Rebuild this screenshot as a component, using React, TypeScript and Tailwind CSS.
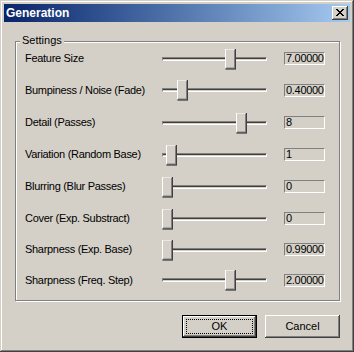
import React from "react";

const raised =
  "shadow-[inset_-1px_-1px_#404040,inset_1px_1px_#ffffff,inset_-2px_-2px_#808080,inset_2px_2px_#d4d0c8]";

const rows = [
  { label: "Feature Size", value: "7.00000", pos: 63, h: "h-[31px]" },
  { label: "Bumpiness / Noise (Fade)", value: "0.40000", pos: 15, h: "h-[32px]" },
  { label: "Detail (Passes)", value: "8", pos: 74, h: "h-[33px]" },
  { label: "Variation (Random Base)", value: "1", pos: 4, h: "h-[31px]" },
  { label: "Blurring (Blur Passes)", value: "0", pos: 0, h: "h-[33px]" },
  { label: "Cover (Exp. Substract)", value: "0", pos: 0, h: "h-[31px]" },
  { label: "Sharpness (Exp. Base)", value: "0.99000", pos: 0, h: "h-[31px]" },
  { label: "Sharpness (Freq. Step)", value: "2.00000", pos: 63, h: "h-[30px]" },
];

const CloseGlyph = () => {
  const px = [
    [0, 0], [1, 0], [6, 0], [7, 0],
    [1, 1], [2, 1], [5, 1], [6, 1],
    [2, 2], [3, 2], [4, 2], [5, 2],
    [3, 3], [4, 3],
    [2, 4], [3, 4], [4, 4], [5, 4],
    [1, 5], [2, 5], [5, 5], [6, 5],
    [0, 6], [1, 6], [6, 6], [7, 6],
  ];
  return (
    <svg width="8" height="7" viewBox="0 0 8 7" shapeRendering="crispEdges">
      {px.map(([x, y]) => (
        <rect key={`${x}-${y}`} x={x} y={y} width="1" height="1" fill="#000" />
      ))}
    </svg>
  );
};

const Slider = ({ pos }: { pos: number }) => (
  <div className="relative w-[105px] h-full flex items-center">
    <div className="w-full h-[4px] border border-t-[#808080] border-l-[#808080] border-b-white border-r-white">
      <div className="h-full border-t border-t-[#404040] bg-[#d4d0c8]" />
    </div>
    {/* thumb */}
    <div
      className={`absolute top-1/2 -translate-y-1/2 w-[11px] h-[21px] bg-[#d4d0c8] ${raised}`}
      style={{ left: pos }}
    />
  </div>
);

export default function App() {
  return (
    <div className="w-[354px] h-[352px] bg-[#d4d0c8] p-[4px] flex flex-col shadow-[inset_-1px_-1px_#404040,inset_1px_1px_#d4d0c8,inset_-2px_-2px_#808080,inset_2px_2px_#ffffff] font-['Liberation_Sans',Arial,sans-serif] text-[11px] leading-[13px] text-black">
      {/* Title bar */}
      <div className="h-[18px] flex items-center bg-linear-to-r from-[#0a246a] to-[#a6caf0] pl-[2px] pr-[2px]">
        <span className="flex-1 text-white font-bold text-[12px]">Generation</span>
        <button className={`w-[16px] h-[14px] bg-[#d4d0c8] flex items-center justify-center pb-[1px] ${raised}`}>
          <CloseGlyph />
        </button>
      </div>

      {/* Client area */}
      <div className="flex-1 flex flex-col pt-[19px] pl-[11px] pr-[10px]">
        <div className="relative w-[325px] h-[260px] border border-[#808080] shadow-[inset_1px_1px_#ffffff,1px_1px_#ffffff] pt-[1px] pl-[9px]">
          <span className="absolute top-[-8px] left-[4px] px-[2px] bg-[#d4d0c8]">Settings</span>
          {rows.map((r) => (
            <div key={r.label} className={`flex items-center ${r.h}`}>
              <div className="w-[137px] tracking-[-0.3px]">{r.label}</div>
              <Slider pos={r.pos} />
              <div className="ml-[17px] w-[41px] h-[13px] border border-t-[#808080] border-l-[#808080] border-b-white border-r-white pl-[1px] leading-[11px] tracking-[-0.3px]">
                {r.value}
              </div>
            </div>
          ))}
        </div>

        {/* Buttons */}
        <div className="mt-[14px] flex justify-end gap-[8px]">
          <button className="relative w-[75px] h-[23px] border border-black bg-[#d4d0c8]">
            <div className={`absolute inset-0 ${raised}`} />
            <div className="absolute inset-[3px] border border-dotted border-black" />
            <span className="relative">OK</span>
          </button>
          <button className={`w-[75px] h-[23px] bg-[#d4d0c8] ${raised}`}>Cancel</button>
        </div>
      </div>
    </div>
  );
}
